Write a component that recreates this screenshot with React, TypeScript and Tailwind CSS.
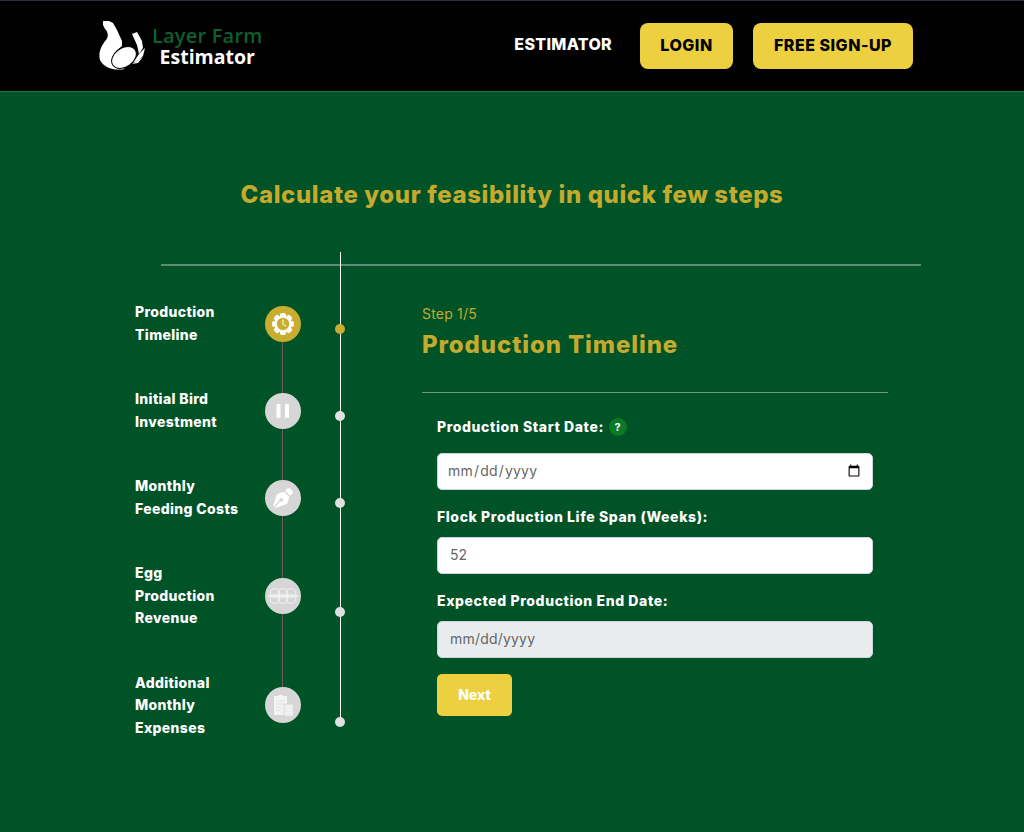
import { FaPenNib } from "react-icons/fa";

const FONT = "font-['Inter','Liberation_Sans',sans-serif]";

function LogoMark() {
  return (
    <svg width="47" height="50" viewBox="0 0 47 50" fill="white" aria-hidden="true">
      <path d="M4 0 L10 0 L14 2 L18 9 L23 20 L23 25 L17 30 L15 44 L26 48 C15 50 5 47 1 39 C-1 32 2 25 7 19 C10 15 9 11 6 8 L4 4 Z" />
      <ellipse cx="25" cy="36.5" rx="13.5" ry="9.5" stroke="black" strokeWidth="1" transform="rotate(-35 25 36.5)" />
      <path d="M33 13 L38 11 L43 20 L44 27 L40 33 L38 24 Z" />
      <path d="M46 27 L44 35 L40 39 L34 42 L40 33 Z" />
      <path d="M44 36 L39 42 L33 43 L38 40 Z" />
    </svg>
  );
}

function GearClockIcon() {
  return (
    <svg width="24" height="24" viewBox="0 0 24 24" aria-hidden="true">
      <g fill="white">
        <circle cx="12" cy="12" r="8.5" />
        {[0, 45, 90, 135, 180, 225, 270, 315].map((a) => (
          <rect key={a} x="9" y="1" width="6" height="5" rx="2" transform={`rotate(${a} 12 12)`} />
        ))}
      </g>
      <circle cx="12" cy="12" r="6.2" fill="#c8ad30" />
      <path d="M12 7.5v5l3.2 1.6" stroke="white" strokeWidth="1" fill="none" />
    </svg>
  );
}

function PauseIcon() {
  return (
    <svg width="14" height="14" viewBox="0 0 14 14" fill="white" aria-hidden="true">
      <rect x="0.5" y="0" width="4" height="14" rx="1.2" />
      <rect x="9" y="0" width="4" height="14" rx="1.2" />
    </svg>
  );
}

function EggTrayIcon() {
  return (
    <svg width="32" height="16" viewBox="0 0 32 16" fill="none" stroke="white" strokeOpacity="0.8" strokeWidth="0.8" aria-hidden="true">
      <path d="M1 8h30" strokeWidth="1.2" />
      <ellipse cx="8" cy="5" rx="4.8" ry="4.5" />
      <ellipse cx="16" cy="5" rx="4.8" ry="4.5" />
      <ellipse cx="24" cy="5" rx="4.8" ry="4.5" />
      <ellipse cx="8" cy="11" rx="4.8" ry="4.5" />
      <ellipse cx="16" cy="11" rx="4.8" ry="4.5" />
      <ellipse cx="24" cy="11" rx="4.8" ry="4.5" />
    </svg>
  );
}

function ClipboardCalcIcon() {
  return (
    <svg width="21" height="23" viewBox="0 0 21 23" aria-hidden="true">
      <path fill="#f4f4f4" d="M1 2h4V1h5v1h4v19H1z" />
      <path stroke="#dcdcdc" strokeWidth="0.8" d="M3 7h9M3 10h7M3 13h6M3 16h5" />
      <rect x="11" y="10" width="9.5" height="12.5" fill="#ececec" stroke="#d6d6d6" strokeWidth="0.8" />
      <path stroke="#fafafa" strokeWidth="0.9" d="M13 13h5.5M13 16h5.5M13 19h5.5" />
    </svg>
  );
}

const STEPS = [
  { lines: ["Production", "Timeline"], icon: <GearClockIcon />, active: true },
  { lines: ["Initial Bird", "Investment"], icon: <PauseIcon /> },
  { lines: ["Monthly", "Feeding Costs"], icon: <FaPenNib className="size-[20px] text-white" /> },
  { lines: ["Egg", "Production", "Revenue"], icon: <EggTrayIcon /> },
  { lines: ["Additional", "Monthly", "Expenses"], icon: <ClipboardCalcIcon /> },
];

function StepRow({ lines, icon, active }: { lines: string[]; icon: React.ReactNode; active?: boolean }) {
  return (
    <div className="relative flex w-[211px] items-center">
      <div className="w-[130px] text-[14px] leading-[22.5px] font-extrabold tracking-[0.35px] text-white">
        {lines.map((line) => (
          <div key={line}>{line}</div>
        ))}
      </div>
      <div
        className={`z-10 flex size-9 items-center justify-center rounded-full ${
          active ? "bg-[#c8ad30]" : "bg-[#d6d6d6]"
        }`}
      >
        {icon}
      </div>
      <span
        className={`absolute right-[1px] bottom-[12.5px] z-10 size-[10px] rounded-full ${
          active ? "bg-[#c8ad30]" : "bg-[#e0e0e0]"
        }`}
      />
    </div>
  );
}

export default function App() {
  return (
    <div className={`${FONT} min-h-[832px] bg-[#005227]`}>
      <header className="flex h-[92px] items-center border-t border-b border-t-[#2c2c4a] border-b-[#1c7a40] bg-black pr-[111px] pl-[99px]">
        <div className="flex items-center">
          <LogoMark />
          <div className="ml-[6px] flex flex-col items-center font-['Open_Sans',sans-serif] leading-[21px] font-semibold">
            <span className="text-[20px] tracking-[0.2px] text-[#0d5f2f]">Layer Farm</span>
            <span className="text-[19.5px] font-bold text-white">Estimator</span>
          </div>
        </div>
        <nav className="ml-auto flex items-center text-[16px] font-extrabold tracking-[0.5px]">
          <a className="mb-[5px] tracking-[0.3px] text-white">ESTIMATOR</a>
          <a className="ml-7 flex h-[46px] w-[93px] items-center justify-center rounded-lg bg-[#ecd03f] pb-[2px] text-black">LOGIN</a>
          <a className="ml-5 flex h-[46px] w-40 items-center justify-center rounded-lg bg-[#ecd03f] pb-[2px] text-black">FREE SIGN-UP</a>
        </nav>
      </header>

      <h1 className="mt-[88px] text-center text-[24px] leading-[30px] font-extrabold tracking-[0.6px] text-[#c4aa2e]">
        Calculate your feasibility in quick few steps
      </h1>

      <div className="relative mt-[42px] ml-[135px] flex">
        <div className="absolute top-3 left-[26px] h-[2px] w-[760px] bg-[#5f8a72]" />
        <div className="absolute top-0 left-[205px] h-[470px] w-px bg-white" />

        <div className="relative mt-[49px] flex flex-col gap-[42px]">
          <div className="absolute top-5 bottom-5 left-[147px] w-px bg-[#6a5f63]" />
          {STEPS.map((step) => (
            <StepRow key={step.lines.join(" ")} {...step} />
          ))}
        </div>

        <section className="mt-[52px] ml-[76px] w-[466px]">
          <p className="text-[14px] leading-5 tracking-[0.2px] text-[#c4aa2e]">Step 1/5</p>
          <h2 className="mt-[6px] text-[24px] leading-[30px] font-extrabold tracking-[0.9px] text-[#c4aa2e]">Production Timeline</h2>
          <div className="mt-[32px] h-px bg-[#6f9a80]" />

          <form className="mt-6 flex w-[436px] translate-x-[15px] flex-col items-start">
            <label className="flex items-center gap-[5px] text-[14px] leading-5 font-extrabold tracking-[0.6px] text-white">
              Production Start Date:
              <span className="flex size-[18px] items-center justify-center rounded-full bg-[#0a7a27] text-[11px] font-bold">?</span>
            </label>
            <input
              type="date"
              className="mt-4 h-[37px] w-full rounded-[5px] border border-[#ced4da] bg-white px-[9px] pb-[2px] text-[14px] tracking-[0.2px] text-[#666]"
            />
            <label className="mt-[17px] text-[14px] leading-5 font-extrabold tracking-[0.6px] text-white">Flock Production Life Span (Weeks):</label>
            <input
              type="text"
              defaultValue="52"
              className="mt-[10px] h-[37px] w-full rounded-[5px] border border-[#ced4da] bg-white px-3 pb-[2px] text-[14px] text-[#666]"
            />
            <label className="mt-[17px] text-[14px] leading-5 font-extrabold tracking-[0.6px] text-white">Expected Production End Date:</label>
            <input
              type="text"
              disabled
              placeholder="mm/dd/yyyy"
              className="mt-[10px] h-[37px] w-full rounded-[5px] border border-[#ced4da] bg-[#e9ecef] px-3 pb-[2px] text-[14px] tracking-[0.2px] placeholder:text-[#666]"
            />
            <button
              type="button"
              className="mt-4 h-[42px] w-[75px] rounded-[5px] bg-[#ecd03f] pb-[2px] text-[14px] font-extrabold text-white"
            >
              Next
            </button>
          </form>
        </section>
      </div>
    </div>
  );
}
